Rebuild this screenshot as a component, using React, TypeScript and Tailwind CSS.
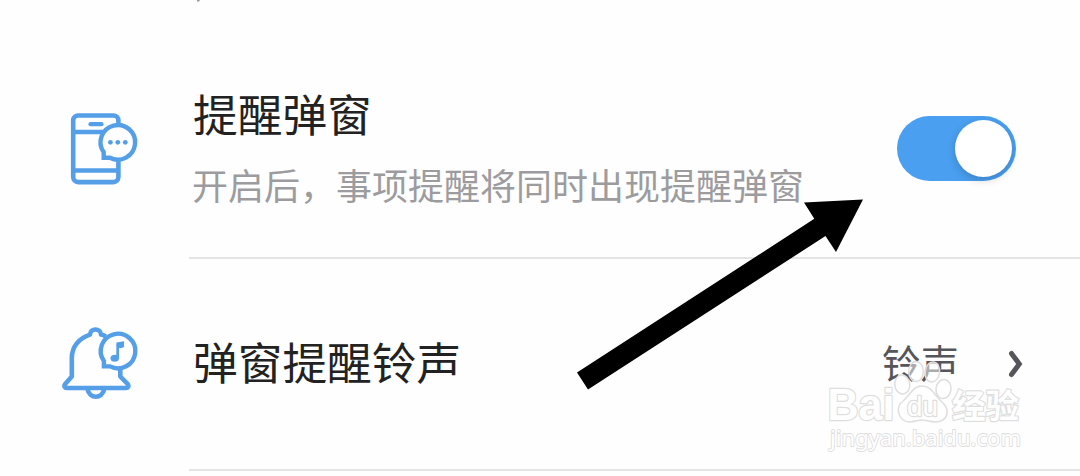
import React from "react";

const BLUE = "#559fe8";

function PhoneIcon() {
  return (
    <svg className="h-[84px] w-20 shrink-0" viewBox="62 107 80 84" fill="none" stroke={BLUE} strokeWidth="4.6">
      <rect x="73.2" y="115.5" width="45.2" height="66.6" rx="5" />
      <path d="M73.2 132H103M73.2 170.5H118.4" />
      <path d="M90.5 124.2H101.5" strokeWidth="4.2" strokeLinecap="round" />
      <path d="M103.7 152.3A17.3 17.3 0 1 1 109.9 157.7H103.7Z" fill="white" strokeWidth="4.4" />
      <g fill={BLUE} stroke="none">
        <circle cx="110.4" cy="142.3" r="2.4" />
        <circle cx="117.8" cy="142.3" r="2.4" />
        <circle cx="125.3" cy="142.3" r="2.4" />
      </g>
    </svg>
  );
}

function BellIcon() {
  return (
    <svg
      className="h-[84px] w-20 shrink-0"
      viewBox="62 321 80 84"
      fill="none"
      stroke={BLUE}
      strokeWidth="4.6"
      strokeLinejoin="round"
    >
      <path d="M106 336.5Q103 335 101 334.6C100.8 327.8 90.2 327.8 90 334.6C79 338 71.8 347 71.8 358V376.5L65 384.2C63.8 386 64.5 388 67 388H125.8C128.3 388 129 386 127.8 384.2L120.3 376.5V369" />
      <path d="M87.3 388.5C89.5 399.5 102.2 399.5 104.4 388.5" />
      <path
        d="M103.9 361A17.3 17.3 0 1 1 110.1 366.4H103.9Z"
        fill="white"
        strokeWidth="4.4"
        strokeLinejoin="miter"
      />
      <path d="M117.7 358V343.5" strokeWidth="2.8" />
      <ellipse cx="114.7" cy="358.3" rx="4.2" ry="3.5" fill={BLUE} stroke="none" />
      <path d="M116.3 342.5L124 341.3V347Q121 349 117.5 347.5Z" fill={BLUE} stroke="none" />
    </svg>
  );
}

function Toggle() {
  return (
    <div className="flex h-[65px] w-[119px] shrink-0 items-center justify-end overflow-visible rounded-full bg-[#4a9ff0] pr-1">
      <div className="size-[57px] rounded-full bg-white shadow-[0_3px_8px_rgba(0,0,0,0.18)]" />
    </div>
  );
}

function Watermark() {
  return (
    <svg
      className="absolute top-[355px] left-[820px] h-[105px] w-[210px]"
      viewBox="820 355 210 105"
      fill="white"
      stroke="#dedede"
      strokeLinejoin="round"
      fontFamily='"Liberation Sans", "Noto Sans CJK SC", sans-serif'
    >
      <g fillOpacity="0.5" strokeWidth="1.5">
        <ellipse cx="902.3" cy="384.5" rx="7.5" ry="9.5" transform="rotate(-8 902.3 384.5)" />
        <ellipse cx="916" cy="371.5" rx="7.3" ry="10" />
        <ellipse cx="932.3" cy="372" rx="7.3" ry="10" transform="rotate(8 932.3 372)" />
        <ellipse cx="943.5" cy="389" rx="7.5" ry="9.5" transform="rotate(8 943.5 389)" />
        <path d="M922 386C913 386 911 394 903 401C895 407 898 421 909 422C915 422 918 420 922 420C926 420 930 422 936 422C949 421 950 409 942 402C934 395 932 386 922 386Z" />
      </g>
      <g strokeWidth="2.4" paintOrder="stroke">
        <text x="827.5" y="420" fontSize="44" fontWeight="700" textLength="67" lengthAdjust="spacingAndGlyphs">
          Bai
        </text>
        <text x="907" y="416" fontSize="27" textLength="31" lengthAdjust="spacingAndGlyphs">
          du
        </text>
        <text x="952" y="418" fontSize="33.5" fontWeight="700" fontFamily='"Noto Sans CJK SC", sans-serif'>
          经验
        </text>
        <text
          x="830"
          y="446"
          fontSize="22"
          strokeWidth="1.8"
          textLength="191"
          lengthAdjust="spacingAndGlyphs"
          fontFamily='"Noto Sans", sans-serif'
        >
          jingyan.baidu.com
        </text>
      </g>
    </svg>
  );
}

export default function App() {
  return (
    <main className="relative h-[476px] w-[1080px] overflow-hidden bg-[#fefefe] font-['Noto_Sans_CJK_SC',sans-serif]">
      <section className="flex h-[259px] pl-[62px]">
        <div className="pt-[107px]">
          <PhoneIcon />
        </div>
        <div className="ml-[47px] flex flex-1 border-b-2 border-[#e4e4e4]">
          <div className="w-[708px] pt-[83px] pl-[4px]">
            <h2 className="h-[60px] text-[44.7px] leading-[60px] whitespace-nowrap text-[#222]">提醒弹窗</h2>
            <p className="mt-[17px] -ml-px text-4xl leading-[48px] whitespace-nowrap text-[#9c9c9f]">
              开启后，事项提醒将同时出现提醒弹窗
            </p>
          </div>
          <div className="pt-[116px]">
            <Toggle />
          </div>
        </div>
      </section>

      <section className="flex h-[212px] pl-[62px]">
        <div className="pt-[62px]">
          <BellIcon />
        </div>
        <div className="ml-[47px] flex flex-1 items-start border-b-2 border-[#e4e4e4] pt-[72px] pl-[4px]">
          <h2 className="w-[689px] text-[44.7px] leading-[60px] whitespace-nowrap text-[#222]">弹窗提醒铃声</h2>
          <span className="w-[120px] text-[38.5px] leading-[60px] whitespace-nowrap text-[#56565a]">铃声</span>
          <svg className="mt-[17px] h-8 w-6" viewBox="1002 348 24 32" fill="none" stroke="#55555a" strokeWidth="5">
            <path d="M1011.5 353.5L1019.3 364L1011.5 374.5" strokeLinecap="round" />
          </svg>
        </div>
      </section>

      <svg className="absolute top-0 left-[190px] h-1 w-4" viewBox="0 0 16 4">
        <path d="M7 0H10L9 1.5H7Z" fill="#999" />
      </svg>
      <svg className="absolute top-[190px] left-[570px] h-[210px] w-[300px]" viewBox="570 190 300 210">
        <path d="M863 199.5L804 202.5L814.3 218.8L577 372.5L588 389.5L825.5 236L836 252Z" fill="#000" />
      </svg>
      <Watermark />
    </main>
  );
}
